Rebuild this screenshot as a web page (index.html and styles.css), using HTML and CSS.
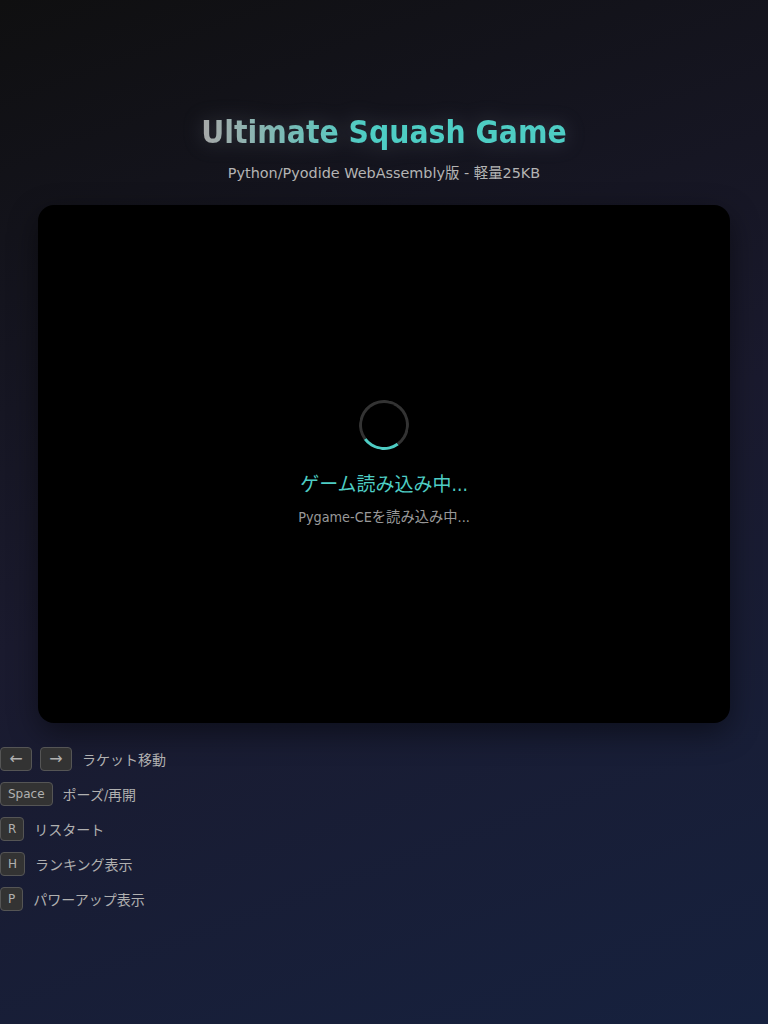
FILE: index.html
```html
<!DOCTYPE html>
<html lang="ja">
<head>
<meta charset="utf-8">
<title>Ultimate Squash Game</title>
<link rel="stylesheet" href="styles.css">
</head>
<body>
  <header class="header">
    <h1 class="title">Ultimate Squash Game</h1>
    <p class="subtitle">Python/Pyodide WebAssembly版 - 軽量25KB</p>
  </header>
  <main class="game">
    <div class="loading">
      <div class="spinner"></div>
      <div class="loading-title">ゲーム読み込み中...</div>
      <div class="loading-sub">Pygame-CEを読み込み中...</div>
    </div>
  </main>
  <ul class="controls">
    <li class="row"><span class="keys"><kbd class="key key-arrow">←</kbd><kbd class="key key-arrow">→</kbd></span><span class="label">ラケット移動</span></li>
    <li class="row"><span class="keys"><kbd class="key">Space</kbd></span><span class="label">ポーズ/再開</span></li>
    <li class="row"><span class="keys"><kbd class="key">R</kbd></span><span class="label">リスタート</span></li>
    <li class="row"><span class="keys"><kbd class="key">H</kbd></span><span class="label">ランキング表示</span></li>
    <li class="row"><span class="keys"><kbd class="key">P</kbd></span><span class="label">パワーアップ表示</span></li>
  </ul>
</body>
</html>
```

FILE: styles.css
```css
html, body {
  margin: 0;
  padding: 0;
}
body {
  min-height: 1024px;
  background: linear-gradient(160deg, #0f0f10 0%, #1a1a2e 50%, #16213e 100%);
  font-family: "DejaVu Sans Condensed", "DejaVu Sans", "Noto Sans CJK JP", sans-serif;
  color: #bbb;
}
.header {
  padding-top: 113px;
  text-align: center;
}
.title {
  margin: 0;
  font-size: 31.5px;
  line-height: 38px;
  font-weight: bold;
  display: inline-block;
  background: linear-gradient(90deg, #a8a8a8 0%, #4ecdc4 45%, #4ecdc4 100%);
  -webkit-background-clip: text;
  background-clip: text;
  color: transparent;
  filter: drop-shadow(0 0 10px rgba(160, 170, 190, 0.25));
}
.subtitle {
  margin: 12px 0 0;
  font-family: "DejaVu Sans", "Noto Sans CJK JP", sans-serif;
  font-size: 14.4px;
  line-height: 20px;
  color: #b4b4b4;
}
.game {
  width: 90%;
  aspect-ratio: 4 / 3;
  margin: 22px auto 0;
  background: #000;
  border-radius: 16px;
  box-shadow: 0 10px 30px rgba(0, 0, 0, 0.45);
  display: flex;
  align-items: center;
  justify-content: center;
}
.loading {
  display: flex;
  flex-direction: column;
  align-items: center;
  margin-top: -2px;
}
.spinner {
  width: 44px;
  height: 44px;
  border: 3px solid #333;
  border-top-color: #4ecdc4;
  border-radius: 50%;
  transform: rotate(189deg);
}
.loading-title {
  margin-top: 22px;
  font-size: 19px;
  line-height: 24px;
  color: #4ecdc4;
}
.loading-sub {
  margin-top: 11px;
  font-size: 14.3px;
  line-height: 20px;
  color: #999;
}
.controls {
  list-style: none;
  margin: 24px 0 0;
  padding: 0;
  display: flex;
  flex-direction: column;
  gap: 11px;
}
.row {
  display: flex;
  align-items: center;
  gap: 10px;
  height: 24px;
}
.keys {
  display: flex;
  gap: 8px;
}
.key {
  display: inline-block;
  box-sizing: border-box;
  height: 24px;
  padding: 0 7px;
  font-family: "DejaVu Sans", sans-serif;
  font-size: 12px;
  line-height: 22px;
  color: #b0b0b0;
  background: #333;
  border: 1px solid #555;
  border-radius: 4px;
}
.key-arrow {
  width: 32px;
  padding: 0;
  text-align: center;
  font-size: 16px;
}
.label {
  font-size: 14px;
  color: #b0b0b0;
}
```
